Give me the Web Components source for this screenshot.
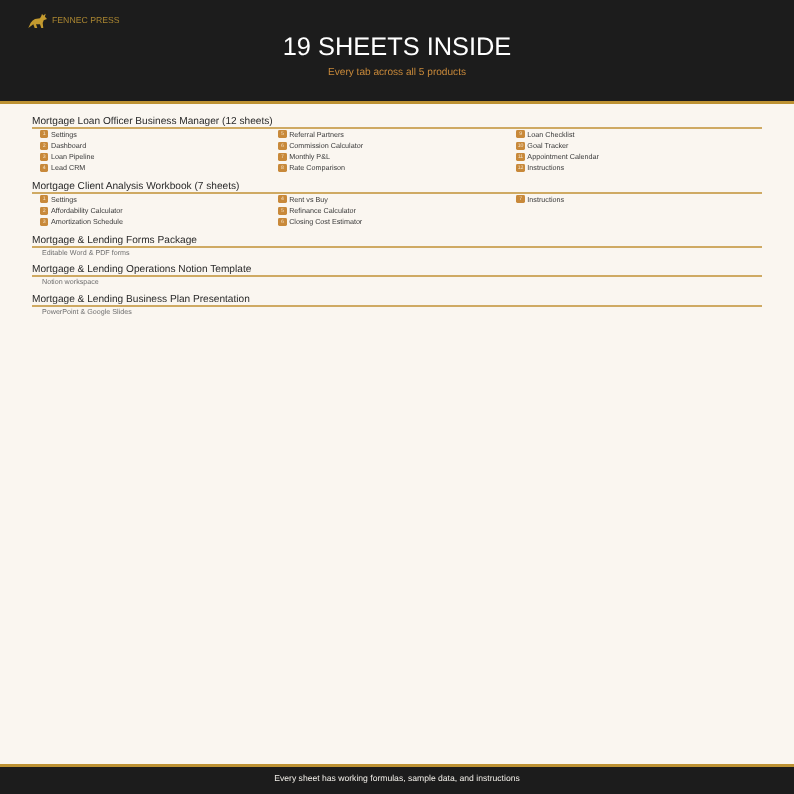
<!DOCTYPE html>
<html lang="en"><head><meta charset="utf-8"><title>19 Sheets Inside</title>
<style>
html,body{margin:0;padding:0;height:794px;overflow:hidden;background:#faf6f0}
body{font-family:"Liberation Sans",Arial,sans-serif;text-rendering:geometricPrecision}
sheets-page{height:794px}
</style></head><body>
<sheets-page>
  <page-header slot="header" brand="FENNEC PRESS" title="19 SHEETS INSIDE" sub="Every tab across all 5 products"></page-header>
  <product-section title="Mortgage Loan Officer Business Manager (12 sheets)" style="--gap-top:11px">
    <sheet-item n="1">Settings</sheet-item><sheet-item n="5">Referral Partners</sheet-item><sheet-item n="9">Loan Checklist</sheet-item>
    <sheet-item n="2">Dashboard</sheet-item><sheet-item n="6">Commission Calculator</sheet-item><sheet-item n="10">Goal Tracker</sheet-item>
    <sheet-item n="3">Loan Pipeline</sheet-item><sheet-item n="7">Monthly P&amp;L</sheet-item><sheet-item n="11">Appointment Calendar</sheet-item>
    <sheet-item n="4">Lead CRM</sheet-item><sheet-item n="8">Rate Comparison</sheet-item><sheet-item n="12">Instructions</sheet-item>
  </product-section>
  <product-section title="Mortgage Client Analysis Workbook (7 sheets)" style="--gap-top:6.3px">
    <sheet-item n="1">Settings</sheet-item><sheet-item n="4">Rent vs Buy</sheet-item><sheet-item n="7">Instructions</sheet-item>
    <sheet-item n="2">Affordability Calculator</sheet-item><sheet-item n="5">Refinance Calculator</sheet-item><span></span>
    <sheet-item n="3">Amortization Schedule</sheet-item><sheet-item n="6">Closing Cost Estimator</sheet-item>
  </product-section>
  <product-section title="Mortgage &amp; Lending Forms Package" note="Editable Word &amp; PDF forms" style="--gap-top:6.4px"></product-section>
  <product-section title="Mortgage &amp; Lending Operations Notion Template" note="Notion workspace"></product-section>
  <product-section title="Mortgage &amp; Lending Business Plan Presentation" note="PowerPoint &amp; Google Slides"></product-section>
  <page-footer slot="footer">Every sheet has working formulas, sample data, and instructions</page-footer>
</sheets-page>
<script>
const def=(name,html,setup)=>customElements.define(name,class extends HTMLElement{
  connectedCallback(){ if(this.shadowRoot) return; const r=this.attachShadow({mode:'open'}); r.innerHTML=html; if(setup) setup(r,this); }
});
def('sheets-page',`<style>
:host{display:flex;flex-direction:column;height:794px;background:#faf6f0;color:#2a2a2a;filter:blur(.3px)}
main{flex:1;padding:0 32px;min-height:0;display:flex;flex-direction:column}
</style><slot name="header"></slot><main><slot></slot></main><slot name="footer"></slot>`);
def('page-header',`<style>
:host{display:block;position:relative;height:101px;background:#1c1c1c;border-bottom:3px solid #bd9233;text-align:center}
.brand{position:absolute;left:27px;top:11px;display:flex;align-items:center;gap:4px;color:#a98531;font-size:8.7px;line-height:18px}
svg{width:21px;height:18px;display:block}
h1{margin:0;padding-top:31.5px;font-size:25.4px;line-height:31px;font-weight:400;color:#fff}
p{margin:0;padding-top:3.6px;font-size:10.1px;line-height:13px;color:#c8893a}
</style><div class="brand"><svg viewBox="0 0 21 18"><path fill="#c39a2f" d="M1.3 17 L3.7 11.8 Q5.5 9 8 8 L13 7.2 L14.3 5 L15 2.7 L16.2 4.4 L18.7 2.7 L17.9 5.7 L20 8 L16.7 9.3 L15.7 12 L16.3 17 L14.3 17 L13 13.3 L9 13.3 L10.3 17 L7.7 17 L6.3 13.3 L3.7 15.3 Z"/></svg><span id="b"></span></div><h1 id="t"></h1><p id="s"></p>`,(r,h)=>{
  r.getElementById('b').textContent=h.getAttribute('brand');
  r.getElementById('t').textContent=h.getAttribute('title');
  r.getElementById('s').textContent=h.getAttribute('sub');
});
def('product-section',`<style>
:host{display:block;padding-top:var(--gap-top,5.4px)}
h2{margin:0;padding-top:2px;font-size:10.14px;line-height:10px;font-weight:400;color:#2a2a2a;border-bottom:2px solid #cfaa63}
.grid{display:grid;grid-template-columns:repeat(3,238.2px);padding:0 0 0 8px;grid-auto-rows:11.25px;margin-top:-.3px}
p{margin:0;padding:1px 0 0 10px;font-size:7.15px;line-height:9px;color:#6f6f6f}
</style><h2 id="t"></h2><div class="grid" id="g"><slot></slot></div><p id="n"></p>`,(r,h)=>{
  r.getElementById('t').textContent=h.getAttribute('title');
  const n=h.getAttribute('note');
  if(n){r.getElementById('n').textContent=n;r.getElementById('g').remove();}
  else r.getElementById('n').remove();
});
def('sheet-item',`<style>
:host{display:flex;align-items:center;gap:2.6px;font-size:7.2px;line-height:11.2px;color:#3a3a3a;white-space:nowrap}
b{display:block;width:8.4px;height:8px;border-radius:1.4px;background:#c8893a;color:#f3e2c8;font-size:5.2px;line-height:8px;font-weight:400;text-align:center}
</style><b id="n"></b><span><slot></slot></span>`,(r,h)=>{r.getElementById('n').textContent=h.getAttribute('n');});
def('page-footer',`<style>
:host{display:block;height:27px;background:#1c1c1c;border-top:3px solid #bd9233;color:#f2efe9;font-size:8.6px;line-height:23px;text-align:center}
</style><slot></slot>`);
</script>
</body></html>
